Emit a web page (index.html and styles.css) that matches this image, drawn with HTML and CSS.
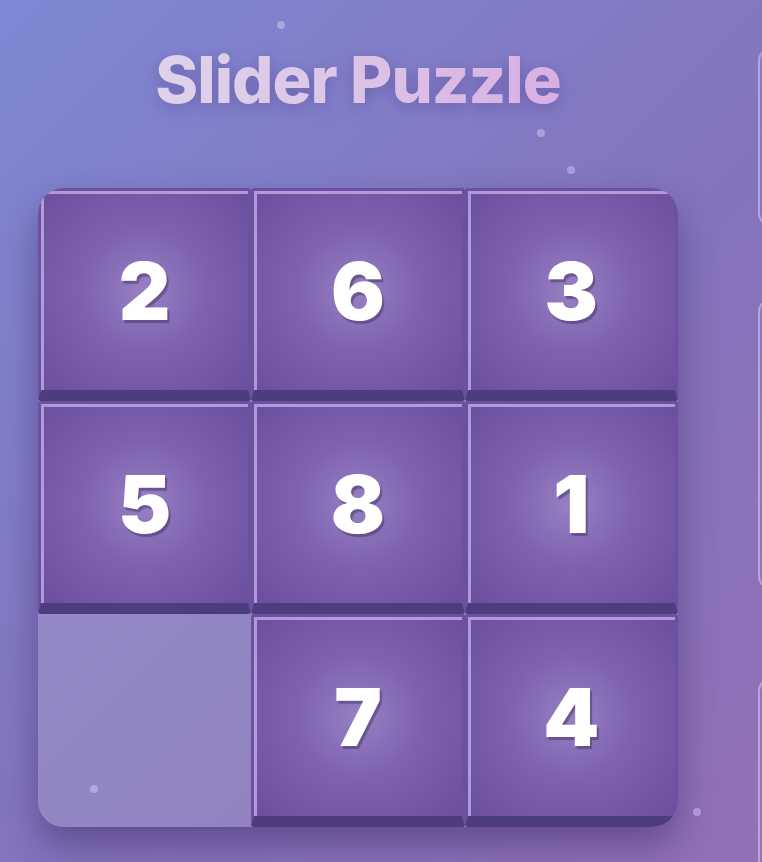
FILE: index.html
```html
<!DOCTYPE html>
<html lang="en">
<head>
    <meta charset="UTF-8">
    <meta name="viewport" content="width=device-width, initial-scale=1.0">
    <title>Slider Puzzle</title>
    <link rel="stylesheet" href="styles.css">
</head>
<body>
    <!-- Floating background particles -->
    <span class="particle p1"></span>
    <span class="particle p2"></span>
    <span class="particle p3"></span>
    <span class="particle p4"></span>
    <span class="particle p5"></span>

    <div class="app">
        <div class="game">
            <h1 class="title">Slider Puzzle</h1>

            <div class="board" id="board">
                <div class="tile">2</div>
                <div class="tile">6</div>
                <div class="tile">3</div>
                <div class="tile">5</div>
                <div class="tile">8</div>
                <div class="tile">1</div>
                <div class="tile empty"></div>
                <div class="tile">7</div>
                <div class="tile">4</div>
            </div>
        </div>

        <div class="sidebar">
            <div class="panel panel-stats"></div>
            <div class="panel panel-controls"></div>
            <div class="panel panel-best"></div>
        </div>
    </div>
</body>
</html>
```

FILE: styles.css
```css
/* Slider puzzle page */
body {
    margin: 0;
    height: 862px;
    overflow: hidden;
    font-family: Inter, "Liberation Sans", sans-serif;
    background: linear-gradient(135deg, #7e88d4 0%, #8474bd 55%, #9270b6 100%);
    position: relative;
}

.app {
    display: flex;
    gap: 80px;
    padding-left: 38px;
}

.game {
    width: 640px;
    flex-shrink: 0;
}

.title {
    margin: 0;
    padding-top: 47px;
    height: 188px;
    box-sizing: border-box;
    text-align: center;
    font-size: 65px;
    font-weight: 800;
    line-height: 1;
    letter-spacing: -1px;
    background: linear-gradient(90deg, #e2dbec 0%, #dcc4e6 50%, #d7a3e2 100%);
    -webkit-background-clip: text;
    background-clip: text;
    color: transparent;
    filter: drop-shadow(0 4px 8px rgba(70, 50, 130, 0.35));
}

.board {
    display: grid;
    grid-template-columns: repeat(3, 1fr);
    grid-template-rows: repeat(3, 1fr);
    width: 640px;
    height: 639px;
    border-radius: 26px;
    overflow: hidden;
    background: linear-gradient(135deg, #958bc9 0%, #8f80bd 100%);
    box-shadow: 0 18px 36px rgba(50, 30, 90, 0.45);
}

.tile {
    display: flex;
    align-items: center;
    justify-content: center;
    border: 3px solid #6d51a1;
    border-bottom: 11px solid #4d3d7e;
    border-radius: 3px;
    background: radial-gradient(circle at center, #9781c2 0%, #7d60b0 45%, #6c4e9f 100%);
    box-shadow: inset 3px 3px 0 rgba(205, 185, 240, 0.7);
    color: #fff;
    font-size: 80px;
    font-weight: 900;
    text-shadow: 2px 3px 1px rgba(60, 40, 90, 0.45);
    cursor: pointer;
}

.tile.empty {
    border: none;
    background: transparent;
    box-shadow: none;
    cursor: default;
}

.sidebar {
    display: flex;
    flex-direction: column;
    padding-top: 47px;
}

.panel {
    width: 300px;
    border: 2px solid rgba(235, 220, 255, 0.45);
    border-radius: 14px;
    background: rgba(255, 255, 255, 0.03);
    box-sizing: border-box;
}

.panel-stats {
    height: 180px;
}

.panel-controls {
    height: 292px;
    margin-top: 71px;
}

.panel-best {
    height: 260px;
    margin-top: 87px;
}

/* Decorative particles */
.particle {
    position: absolute;
    width: 8px;
    height: 8px;
    border-radius: 50%;
    background: rgba(230, 220, 255, 0.4);
    z-index: 2;
}

.p1 { left: 277px; top: 21px; }
.p2 { left: 537px; top: 129px; }
.p3 { left: 567px; top: 166px; }
.p4 { left: 90px; top: 785px; }
.p5 { left: 693px; top: 808px; }
```
